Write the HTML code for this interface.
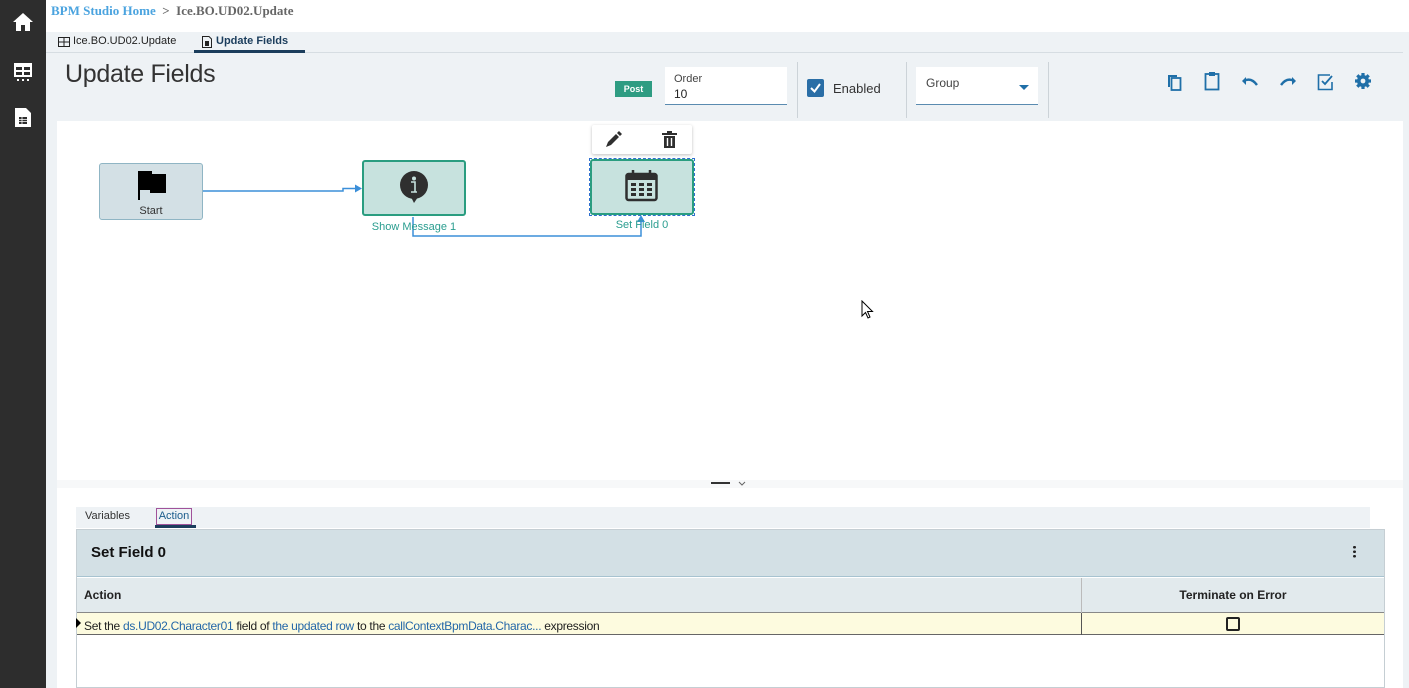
<!DOCTYPE html>
<html><head><meta charset="utf-8"><style>
*{box-sizing:border-box;margin:0;padding:0}
body{width:1409px;height:688px;overflow:hidden;background:#eef2f5;font-family:"Liberation Sans",sans-serif;position:relative;color:#222}
.abs{position:absolute}
.side{left:0;top:0;width:46px;height:688px;background:#2d2d2d}
.top{left:46px;top:0;width:1363px;height:32px;background:#fff}
.crumb{left:51px;top:3px;font-family:"Liberation Serif",serif;font-weight:bold;font-size:13px;color:#666}
.crumb span{color:#4aa3df}
.tabbar{left:46px;top:32px;width:1363px;height:21px;background:#eef2f5;border-bottom:1px solid #d6dde2}
.tab{font-size:11px;top:35px;color:#222}
h1{position:absolute;left:65px;top:60px;font-size:25px;font-weight:normal;color:#333;letter-spacing:-0.3px}
.canvas{left:57px;top:121px;width:1346px;height:359px;background:#fff}
.node{border:2px solid;border-radius:3px}
.lbl{font-size:11px;color:#2a9d8f;text-align:center}
.icn{fill:#1f6fa8}
</style></head><body>
<div class="abs side"></div>
<svg class="abs" style="left:12px;top:12px" width="22" height="20" viewBox="0 0 22 20"><path d="M11 1 L1 10 H4 V19 H9 V13 H13 V19 H18 V10 H21 Z" fill="#fff"/></svg>
<svg class="abs" style="left:13px;top:62px" width="20" height="20" viewBox="0 0 20 20"><rect x="1" y="1" width="18" height="14" fill="#fff"/><rect x="3" y="5" width="6" height="3" fill="#2d2d2d"/><rect x="11" y="5" width="6" height="3" fill="#2d2d2d"/><rect x="3" y="10" width="6" height="3" fill="#2d2d2d"/><rect x="11" y="10" width="6" height="3" fill="#2d2d2d"/><rect x="4" y="17" width="2" height="2" fill="#fff"/><rect x="9" y="17" width="2" height="2" fill="#fff"/><rect x="14" y="17" width="2" height="2" fill="#fff"/></svg>
<svg class="abs" style="left:14px;top:107px" width="18" height="21" viewBox="0 0 18 21"><path d="M1 1 H12 L17 6 V20 H1 Z" fill="#fff"/><rect x="5" y="10" width="8" height="7" fill="#2d2d2d"/><path d="M5 12.5 H13 M5 14.5 H13 M8 10 V17" stroke="#fff" stroke-width="0.8"/></svg>
<div class="abs top"></div>
<div class="abs crumb"><span>BPM Studio Home</span> &nbsp;&gt;&nbsp; Ice.BO.UD02.Update</div>
<div class="abs tabbar"></div>
<svg class="abs" style="left:58px;top:37px" width="12" height="12" viewBox="0 0 12 12"><rect x="0.5" y="0.5" width="11" height="9" fill="none" stroke="#222"/><path d="M0 5 H12 M6 0 V10" stroke="#222"/></svg>
<div class="abs tab" style="left:73px">Ice.BO.UD02.Update</div>
<svg class="abs" style="left:202px;top:36px" width="10" height="12" viewBox="0 0 10 12"><path d="M0.5 0.5 H7 L9.5 3 V11.5 H0.5 Z" fill="none" stroke="#222"/><rect x="3" y="5" width="4" height="5" fill="#222"/></svg>
<div class="abs tab" style="left:216px;font-weight:bold;color:#1b3d5c">Update Fields</div>
<div class="abs" style="left:194px;top:50px;width:111px;height:3px;background:#1b3d5c"></div>
<h1>Update Fields</h1>
<div class="abs" style="left:615px;top:81px;width:37px;height:16px;background:#2e9c82;color:#fff;font-size:9px;font-weight:bold;text-align:center;line-height:16px">Post</div>
<div class="abs" style="left:665px;top:67px;width:122px;height:38px;background:#fff;border-bottom:1px solid #5a8bb0"><div style="font-size:11px;color:#444;margin:6px 0 0 9px">Order</div><div style="font-size:12px;margin:2px 0 0 9px">10</div></div>
<div class="abs" style="left:797px;top:62px;width:1px;height:56px;background:#ccd3d8"></div>
<div class="abs" style="left:807px;top:79px;width:17px;height:18px;background:#2a6ea6;border-radius:2px"><svg width="17" height="18"><path d="M4 9 L7.5 12.5 L13 5" stroke="#fff" stroke-width="2" fill="none"/></svg></div>
<div class="abs" style="left:833px;top:81px;font-size:13px;color:#333">Enabled</div>
<div class="abs" style="left:906px;top:62px;width:1px;height:56px;background:#ccd3d8"></div>
<div class="abs" style="left:916px;top:67px;width:122px;height:38px;background:#fff;border-bottom:1px solid #5a8bb0"><div style="font-size:12px;color:#444;margin:9px 0 0 10px">Group</div><svg class="abs" style="left:103px;top:18px" width="10" height="6"><path d="M0 0 H10 L5 5Z" fill="#1f6fa8"/></svg></div>
<div class="abs" style="left:1048px;top:62px;width:1px;height:56px;background:#ccd3d8"></div>
<svg class="abs" style="left:1166px;top:72px" width="18" height="20" viewBox="0 0 18 20"><path d="M2 3 V15 H4 V5 H11 V3 Z" class="icn"/><rect x="5.5" y="6" width="9" height="12" fill="none" stroke="#1f6fa8" stroke-width="1.8"/></svg>
<svg class="abs" style="left:1204px;top:71px" width="16" height="20" viewBox="0 0 16 20"><rect x="1.5" y="3" width="13" height="15.5" fill="none" stroke="#1f6fa8" stroke-width="1.8"/><rect x="5" y="1" width="6" height="4" class="icn"/></svg>
<svg class="abs" style="left:1241px;top:75px" width="18" height="12" viewBox="0 0 18 12"><path d="M5 2 L1 6 L5 10 Z" class="icn"/><path d="M3 6 Q10 2 16 10" stroke="#1f6fa8" stroke-width="2.4" fill="none"/></svg>
<svg class="abs" style="left:1279px;top:75px" width="18" height="12" viewBox="0 0 18 12"><path d="M13 2 L17 6 L13 10 Z" class="icn"/><path d="M15 6 Q8 2 2 10" stroke="#1f6fa8" stroke-width="2.4" fill="none"/></svg>
<svg class="abs" style="left:1317px;top:73px" width="18" height="18" viewBox="0 0 18 18"><path d="M13 2 H1.5 V16.5 H15 V9" fill="none" stroke="#1f6fa8" stroke-width="1.6"/><path d="M5 8 L8 11 L15 3" stroke="#1f6fa8" stroke-width="1.8" fill="none"/></svg>
<svg class="abs" style="left:1354px;top:72px" width="18" height="18" viewBox="0 0 18 18"><circle cx="9" cy="9" r="6" class="icn"/><g stroke="#1f6fa8" stroke-width="3.2"><path d="M9 1 V17 M1 9 H17 M3.3 3.3 L14.7 14.7 M14.7 3.3 L3.3 14.7"/></g><circle cx="9" cy="9" r="2.4" fill="#eef2f5"/></svg>

<div class="abs canvas"></div>
<div class="abs node" style="left:99px;top:163px;width:104px;height:57px;background:#d3e0e5;border-color:#8fb5c4;border-width:1.5px"></div>
<svg class="abs" style="left:138px;top:170px" width="28" height="30" viewBox="0 0 28 30"><path d="M1 1 V30 M1 2 H13 V5 H27 V22 H13 V19 H2" fill="#000" stroke="#000" stroke-width="2"/></svg>
<div class="abs" style="left:99px;top:205px;width:104px;text-align:center;font-size:11px;color:#333">Start</div>
<svg class="abs" style="left:0;top:0" width="1409" height="688"><path d="M203 191 H343 V188.5 H355" stroke="#3b8fd9" stroke-width="1.5" fill="none"/><path d="M355 184.5 L362 188.5 L355 192.5Z" fill="#3b8fd9"/><path d="M413 217 V236 H641 V218" stroke="#3b8fd9" stroke-width="1.5" fill="none"/><path d="M637 222 L641 215 L645 222Z" fill="#3b8fd9"/></svg>
<div class="abs node" style="left:362px;top:160px;width:104px;height:56px;background:#c7e2de;border-color:#2a9d80"></div>
<svg class="abs" style="left:398px;top:170px" width="32" height="34" viewBox="0 0 32 34"><circle cx="16" cy="15" r="14" fill="#2f2f2f"/><path d="M12 25 L16 33 L20 27Z" fill="#2f2f2f"/><circle cx="16" cy="8.5" r="2" fill="#c7e2de"/><path d="M13 12 H17 V22 H19 M13 22 H19" stroke="#c7e2de" stroke-width="1.6" fill="none"/></svg>
<div class="abs lbl" style="left:352px;top:221px;width:124px">Show Message 1</div>
<div class="abs" style="left:592px;top:125px;width:100px;height:29px;background:#fff;box-shadow:0 1px 3px rgba(0,0,0,.25);border-radius:2px"></div>
<svg class="abs" style="left:604px;top:131px" width="20" height="18" viewBox="0 0 20 18"><path d="M2 16 L4 11 L12 3 L15 6 L7 14 Z M13 2 L15 0 L18 3 L16 5Z" fill="#2f2f2f"/></svg>
<svg class="abs" style="left:662px;top:131px" width="15" height="17" viewBox="0 0 15 17"><rect x="0" y="2" width="15" height="2" fill="#2f2f2f"/><rect x="5" y="0" width="5" height="2" fill="#2f2f2f"/><path d="M2 5 H13 V17 H2Z" fill="#2f2f2f"/><path d="M5.5 7 V15 M9.5 7 V15" stroke="#fff" stroke-width="1.4"/></svg>
<div class="abs" style="left:589px;top:158px;width:106px;height:58px;border:1px dashed #2f6fd0"></div>
<div class="abs node" style="left:590px;top:159px;width:104px;height:56px;background:#c7e2de;border-color:#2a9d80"></div>
<svg class="abs" style="left:625px;top:170px" width="33" height="32" viewBox="0 0 33 32"><rect x="1.5" y="4" width="30" height="26" rx="2" fill="none" stroke="#2f2f2f" stroke-width="2.5"/><rect x="1.5" y="4" width="30" height="6" fill="#2f2f2f"/><path d="M8 0 V7 M25 0 V7" stroke="#2f2f2f" stroke-width="2.5"/><g fill="#2f2f2f"><rect x="6" y="13" width="5" height="3"/><rect x="14" y="13" width="5" height="3"/><rect x="22" y="13" width="5" height="3"/><rect x="6" y="18" width="5" height="3"/><rect x="14" y="18" width="5" height="3"/><rect x="22" y="18" width="5" height="3"/><rect x="6" y="23" width="5" height="3"/><rect x="14" y="23" width="5" height="3"/><rect x="22" y="23" width="5" height="3"/></g></svg>
<div class="abs lbl" style="left:590px;top:219px;width:104px">Set Field 0</div>
<svg class="abs" style="left:861px;top:300px" width="13" height="20" viewBox="0 0 13 20"><path d="M1 1 V16 L4.5 12.5 L7 18 L9 17 L6.5 11.5 H11.5Z" fill="#fff" stroke="#000"/></svg>

<div class="abs" style="left:57px;top:480px;width:1346px;height:208px;background:#fff"></div>
<div class="abs" style="left:57px;top:480px;width:1346px;height:8px;background:#f7f8f9"></div>
<div class="abs" style="left:711px;top:482px;width:19px;height:2px;background:#333"></div>
<svg class="abs" style="left:738px;top:481px" width="8" height="6"><path d="M1 1 L4 4 L7 1" stroke="#666" fill="none"/></svg>
<div class="abs" style="left:1403px;top:0;width:6px;height:688px;background:#fff"></div>
<div class="abs" style="left:1403px;top:32px;width:6px;height:656px;background:#eef2f5"></div>
<div class="abs" style="left:76px;top:507px;width:1294px;height:21px;background:#eef2f5"></div>
<div class="abs" style="left:85px;top:510px;font-size:11px;color:#333">Variables</div>
<div class="abs" style="left:156px;top:508px;width:36px;height:17px;border:1px solid #a0529a;font-size:11px;color:#1b5c8c;text-align:center;line-height:15px">Action</div>
<div class="abs" style="left:155px;top:525px;width:41px;height:3px;background:#1b3d5c"></div>
<div class="abs" style="left:76px;top:529px;width:1309px;height:159px;border:1px solid #c5ced3;background:#fff"></div>
<div class="abs" style="left:77px;top:530px;width:1307px;height:47px;background:#d3e0e5;border-bottom:1px solid #a7c3d0"></div>
<div class="abs" style="left:91px;top:544px;font-size:15px;font-weight:bold;color:#111">Set Field 0</div>
<div class="abs" style="left:1353px;top:545px;width:3px;height:13px;background:radial-gradient(circle,#222 1.3px,transparent 1.5px) 0 0/3px 4.5px"></div>
<div class="abs" style="left:77px;top:578px;width:1307px;height:35px;background:#e2eaed;border-bottom:1px solid #888"></div>
<div class="abs" style="left:1081px;top:578px;width:1px;height:57px;background:#bbb"></div>
<div class="abs" style="left:84px;top:588px;font-size:12px;font-weight:bold;color:#222">Action</div>
<div class="abs" style="left:1082px;top:588px;width:302px;text-align:center;font-size:12px;font-weight:bold;color:#222">Terminate on Error</div>
<div class="abs" style="left:77px;top:613px;width:1307px;height:22px;background:#fdfbdf;border-bottom:1px solid #666"></div>
<div class="abs" style="left:1081px;top:613px;width:1px;height:22px;background:#555"></div>
<svg class="abs" style="left:76px;top:618px" width="5" height="10"><path d="M0 0 L5 5 L0 10Z" fill="#000"/></svg>
<div class="abs" style="left:84px;top:619px;font-size:12px;color:#222;letter-spacing:-0.3px">Set the <span style="color:#2467a8">ds.UD02.Character01</span> field of <span style="color:#2467a8">the updated row</span> to the <span style="color:#2467a8">callContextBpmData.Charac...</span> expression</div>
<div class="abs" style="left:1226px;top:617px;width:14px;height:14px;border:2px solid #222;border-radius:2px"></div>
</body></html>
